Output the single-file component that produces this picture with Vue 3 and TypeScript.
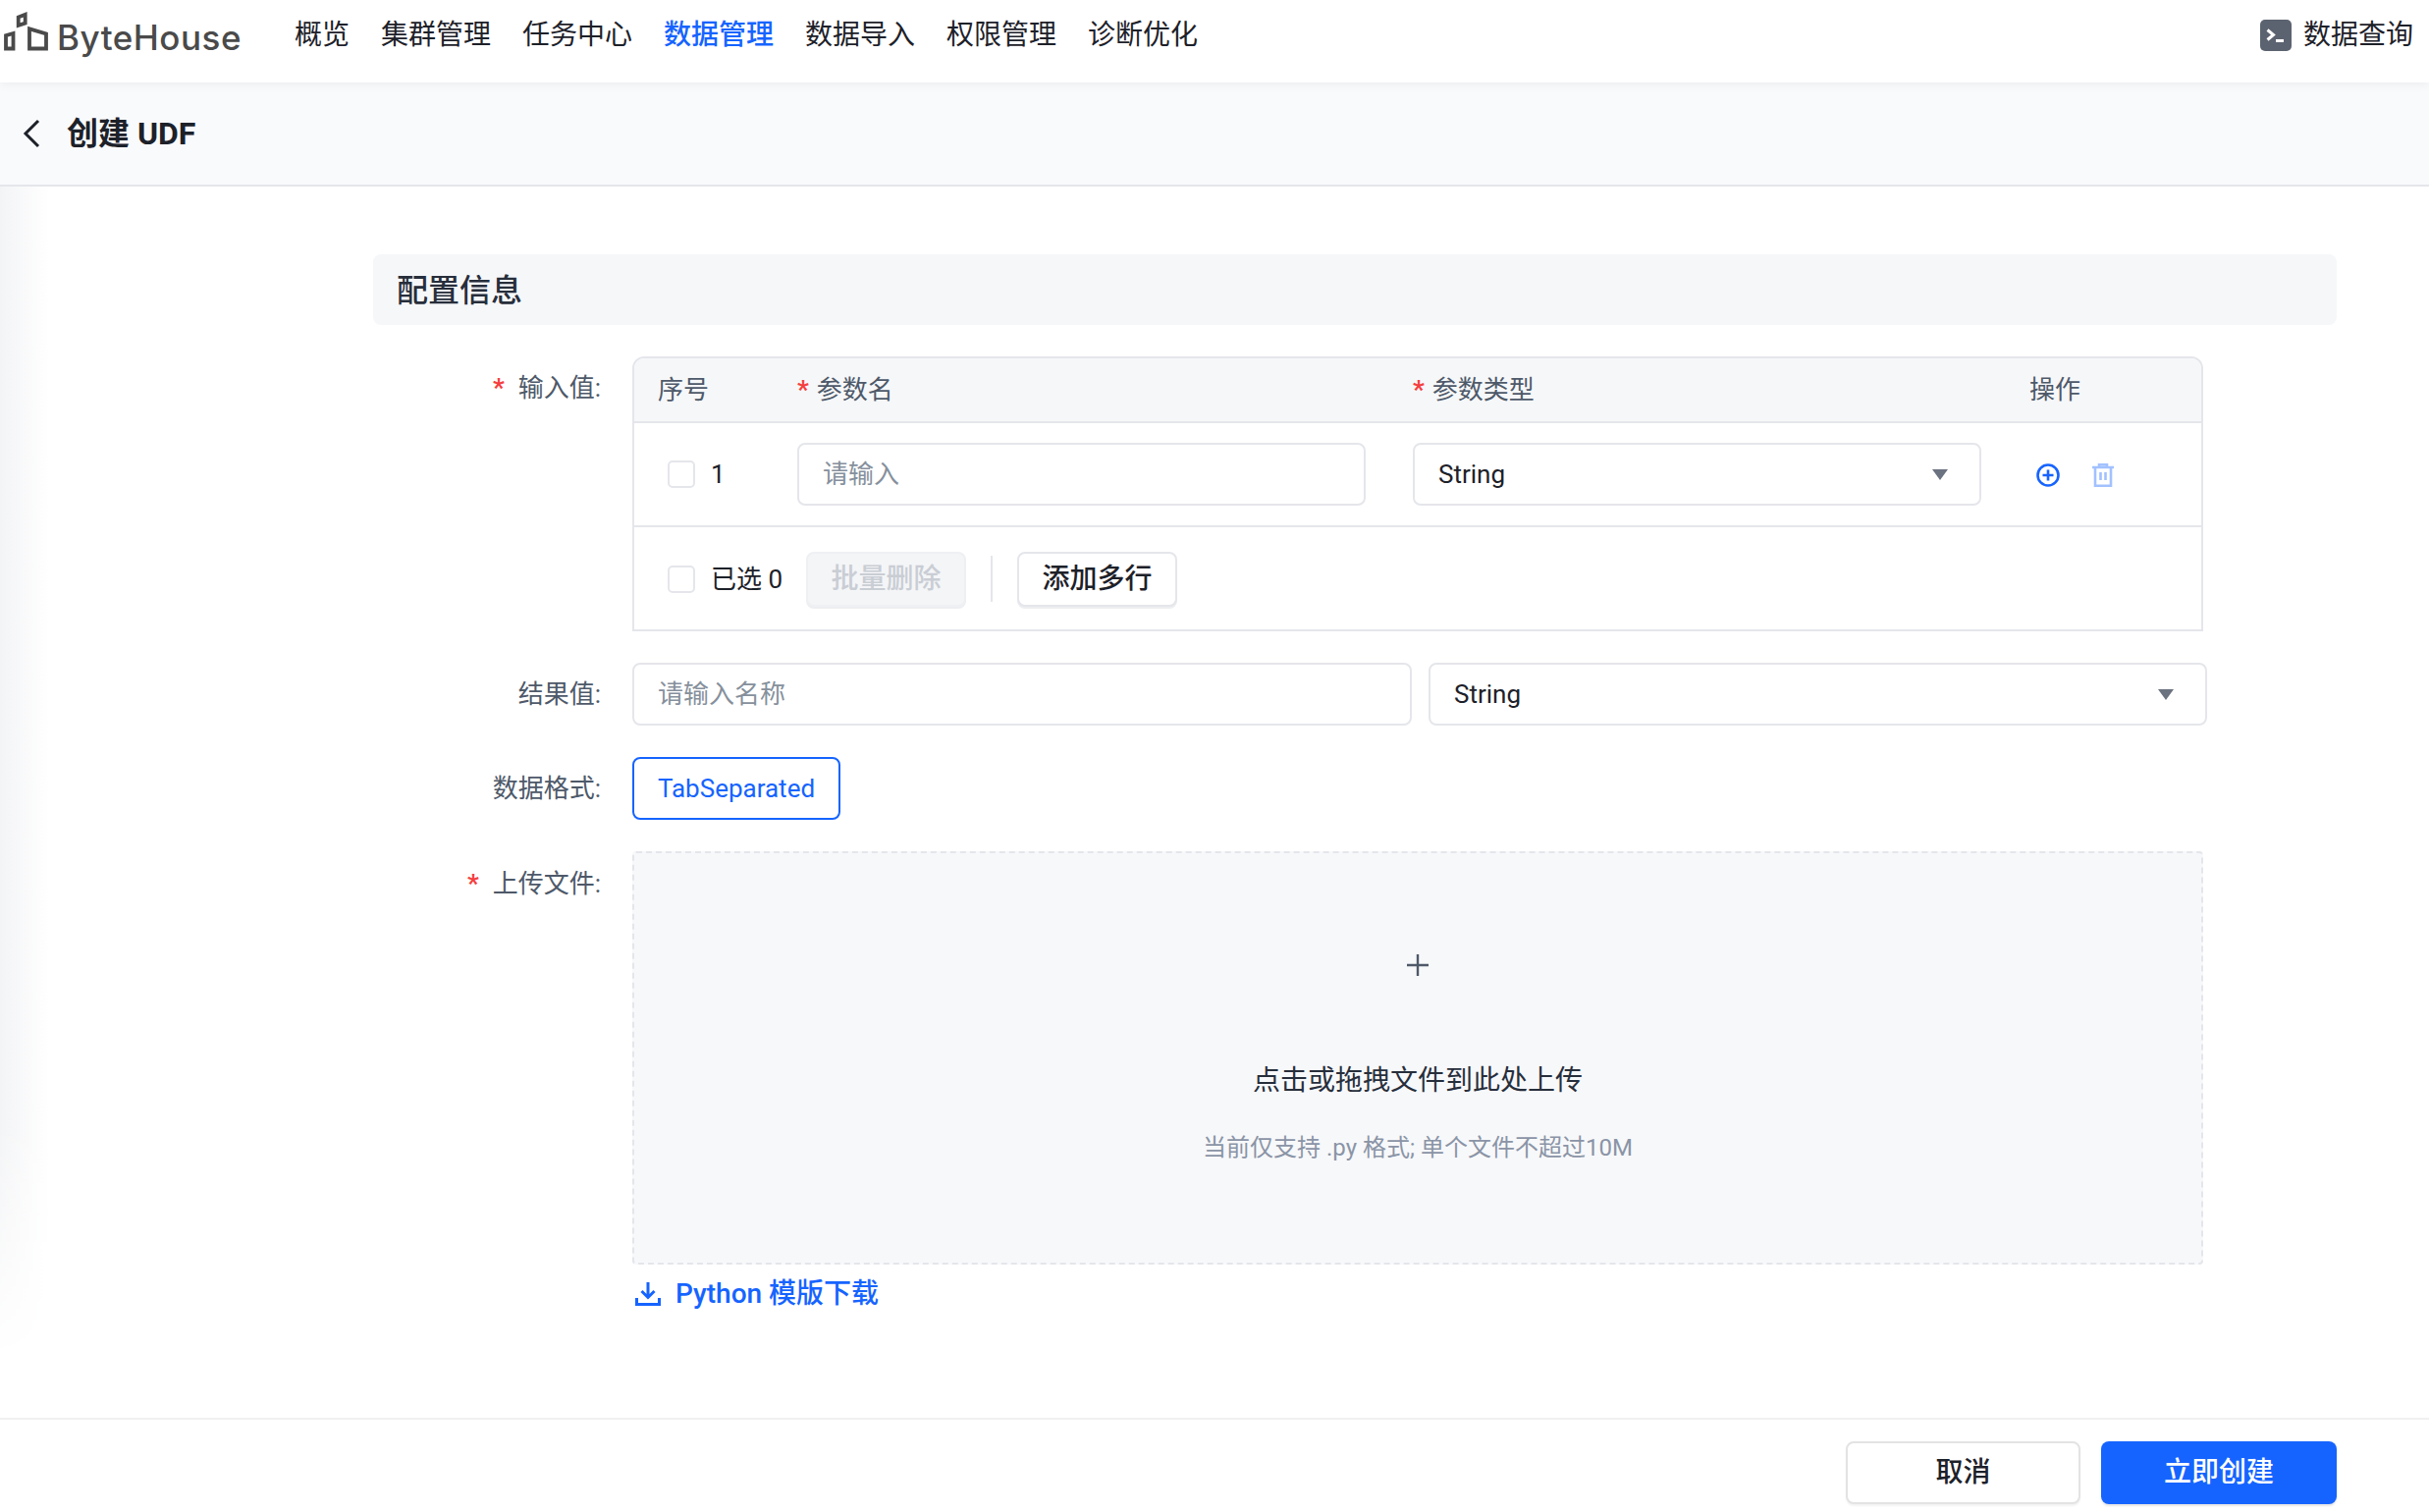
<script setup lang="ts">
/**
 * Create-UDF page: top nav, sub header, config form and footer actions.
 */
interface NavItem {
  label: string
  active?: boolean
}

const navItems: NavItem[] = [
  { label: '概览' },
  { label: '集群管理' },
  { label: '任务中心' },
  { label: '数据管理', active: true },
  { label: '数据导入' },
  { label: '权限管理' },
  { label: '诊断优化' },
]
</script>

<template>
  <div class="page">
    <header class="topbar">
      <div class="logo">
        <svg class="logo-mark" width="50" height="52" viewBox="0 0 50 52" fill="none" stroke="#4a4a4a" stroke-width="3.8">
          <path d="M6 49.5V36.2L13.5 34V49.5Z" />
          <path d="M18.7 25.8V17.6L25.7 14.8V23.6Z" />
          <path d="M30 49.5V29.4L47 34.4V49.5Z" />
        </svg>
        <span class="logo-text">ByteHouse</span>
      </div>
      <nav class="nav">
        <a v-for="item in navItems" :key="item.label" class="nav-item" :class="{ active: item.active }">{{ item.label }}</a>
      </nav>
      <div class="query">
        <span class="query-icon">
          <svg width="32" height="32" viewBox="0 0 32 32" fill="none" stroke="#fff" stroke-width="3">
            <path d="M7.5 10.5L13.5 15.5L7.5 20.5" />
            <path d="M16 21.5H24" />
          </svg>
        </span>
        <span class="query-text">数据查询</span>
      </div>
    </header>

    <div class="subheader">
      <svg width="18" height="30" viewBox="0 0 18 30" fill="none" stroke="#1d2129" stroke-width="3">
        <path d="M16 2L3 15L16 28" />
      </svg>
      <h1 class="title">创建 UDF</h1>
    </div>

    <main class="content">
      <div class="form">
        <h2 class="section">配置信息</h2>

        <div class="row row-table">
          <label class="label"><i class="star">*</i>输入值:</label>
          <div class="table">
            <div class="thead cols">
              <div class="th-first">序号</div>
              <div><i class="star small">*</i>参数名</div>
              <div><i class="star small">*</i>参数类型</div>
              <div>操作</div>
            </div>
            <div class="tbody cols">
              <div class="td-first">
                <span class="checkbox"></span>
                <span>1</span>
              </div>
              <div><div class="input cell-input placeholder">请输入</div></div>
              <div>
                <div class="input cell-select">
                  <span>String</span>
                  <span class="caret"></span>
                </div>
              </div>
              <div class="actions">
                <svg width="24" height="24" viewBox="0 0 24 24" fill="none" stroke="#1664ff" stroke-width="2.6">
                  <circle cx="12" cy="12" r="10.5" />
                  <path d="M12 6.5V17.5M6.5 12H17.5" />
                </svg>
                <svg width="22" height="24" viewBox="0 0 22 24" fill="none" stroke="#a2c1ff" stroke-width="2.6">
                  <path d="M0 4H22M7 4V1.3H15V4" />
                  <path d="M3 4V22.7H19V4" />
                  <path d="M8.5 9V17M13.5 9V17" />
                </svg>
              </div>
            </div>
            <div class="tfoot">
              <span class="checkbox"></span>
              <span class="selected">已选 0</span>
              <button class="btn btn-disabled">批量删除</button>
              <span class="divider"></span>
              <button class="btn btn-outline">添加多行</button>
            </div>
          </div>
        </div>

        <div class="row">
          <label class="label">结果值:</label>
          <div class="result">
            <div class="input placeholder">请输入名称</div>
            <div class="input result-select">
              <span>String</span>
              <span class="caret"></span>
            </div>
          </div>
        </div>

        <div class="row">
          <label class="label">数据格式:</label>
          <div class="format">TabSeparated</div>
        </div>

        <div class="row row-upload">
          <label class="label"><i class="star">*</i>上传文件:</label>
          <div class="upload-col">
            <div class="upload">
              <svg class="upload-plus" width="22" height="22" viewBox="0 0 22 22" fill="none" stroke="#4e5969" stroke-width="2.4">
                <path d="M11 0V22M0 11H22" />
              </svg>
              <p class="upload-title">点击或拖拽文件到此处上传</p>
              <p class="upload-hint">当前仅支持 .py 格式; 单个文件不超过10M</p>
            </div>
            <a class="download">
              <svg width="26" height="24" viewBox="0 0 26 24" fill="none" stroke="#1664ff" stroke-width="3">
                <path d="M13 0V15M6.5 9L13 15.5L19.5 9" />
                <path d="M1.5 16V22.5H24.5V16" />
              </svg>
              <span>Python 模版下载</span>
            </a>
          </div>
        </div>
      </div>
    </main>

    <footer class="footer">
      <button class="btn-footer cancel">取消</button>
      <button class="btn-footer primary">立即创建</button>
    </footer>
  </div>
</template>

<style>
html,
body {
  margin: 0;
  background: #fff;
}
</style>

<style scoped>
.page {
  display: flex;
  flex-direction: column;
  height: 1540px;
  overflow: hidden;
  font-family: Roboto, "Noto Sans CJK SC", sans-serif;
  font-size: 26px;
  line-height: 36px;
  color: #1d2129;
  background: #fff;
}

/* ── Top bar ─────────────────────────────── */
.topbar {
  position: relative;
  z-index: 2;
  display: flex;
  align-items: flex-start;
  flex: none;
  height: 84px;
  background: #fff;
  box-shadow: 0 2px 10px rgba(0, 0, 0, 0.06);
}
.logo {
  display: flex;
  align-items: flex-start;
  width: 300px;
  flex: none;
}
.logo-mark {
  flex: none;
}
.logo-text {
  margin: 18px 0 0 8px;
  font-family: Inter, sans-serif;
  font-size: 35px;
  font-weight: 500;
  line-height: 40px;
  letter-spacing: 0.5px;
  color: #4a4a4a;
}
.nav {
  display: flex;
  gap: 32px;
}
.nav-item {
  font-size: 28px;
  line-height: 72px;
  color: #1d2129;
}
.nav-item.active {
  color: #1664ff;
  font-weight: 500;
}
.query {
  display: flex;
  align-items: flex-start;
  gap: 12px;
  margin-left: auto;
  margin-right: 16px;
  padding-top: 20px;
}
.query-text {
  font-size: 28px;
  line-height: 32px;
}
.query-icon {
  display: flex;
  width: 32px;
  height: 32px;
  border-radius: 5px;
  background: #5c6370;
}

/* ── Sub header ──────────────────────────── */
.subheader {
  display: flex;
  align-items: center;
  flex: none;
  box-sizing: border-box;
  height: 106px;
  padding-left: 23px;
  background: #f9fafc;
  border-bottom: 2px solid #e5e6eb;
}
.title {
  margin: 0 0 0 27px;
  font-size: 32px;
  font-weight: 700;
  line-height: 44px;
  color: #1d2129;
}

/* ── Form ────────────────────────────────── */
.content {
  position: relative;
  flex: 1;
  min-height: 0;
}
.content::before {
  content: "";
  position: absolute;
  left: 0;
  top: 0;
  bottom: 60px;
  width: 50px;
  background: linear-gradient(90deg, #f3f4f6, #fff);
  -webkit-mask-image: linear-gradient(#000 80%, transparent);
  mask-image: linear-gradient(#000 80%, transparent);
}
.form {
  position: relative;
  box-sizing: border-box;
  width: 2000px;
  margin-left: 380px;
  padding-top: 69px;
}
.section {
  box-sizing: border-box;
  height: 72px;
  margin: 0 0 32px;
  padding-left: 24px;
  border-radius: 8px;
  background: #f6f7f9;
  font-size: 32px;
  font-weight: 500;
  line-height: 74px;
  color: #272e3b;
}
.row {
  display: flex;
  margin-bottom: 32px;
}
.label {
  flex: none;
  width: 232px;
  margin-right: 32px;
  text-align: right;
  line-height: 64px;
  color: #4e5969;
}
.row-upload .label {
  padding-top: 1px;
}
.star {
  margin-right: 14px;
  font-style: normal;
  font-weight: 700;
  color: #f53f3f;
}
.star.small {
  margin-right: 8px;
}

/* ── Table ───────────────────────────────── */
.table {
  box-sizing: border-box;
  width: 1600px;
  height: 280px;
  border: 2px solid #e5e6eb;
  border-radius: 12px 12px 0 0;
}
.cols {
  display: grid;
  grid-template-columns: 166px 627px 628px 1fr;
  align-items: center;
}
.thead {
  box-sizing: border-box;
  height: 66px;
  background: #f6f7f9;
  border-radius: 10px 10px 0 0;
  border-bottom: 2px solid #e5e6eb;
  color: #4e5969;
}
.th-first {
  padding-left: 24px;
}
.tbody {
  box-sizing: border-box;
  height: 106px;
  border-bottom: 2px solid #e5e6eb;
}
.td-first {
  display: flex;
  align-items: center;
  gap: 16px;
  padding-left: 34px;
}
.checkbox {
  flex: none;
  box-sizing: border-box;
  width: 28px;
  height: 28px;
  border: 2px solid #e5e6eb;
  border-radius: 5px;
  background: #fff;
}
.input {
  display: flex;
  align-items: center;
  box-sizing: border-box;
  height: 64px;
  padding: 0 24px;
  border: 2px solid #e5e6eb;
  border-radius: 8px;
  background: #fff;
}
.placeholder {
  color: #86909c;
}
.cell-input {
  width: 579px;
}
.cell-select {
  justify-content: space-between;
  width: 579px;
  padding-right: 32px;
}
.caret {
  width: 0;
  height: 0;
  border-left: 8px solid transparent;
  border-right: 8px solid transparent;
  border-top: 11px solid #6b7280;
}
.actions {
  display: flex;
  align-items: center;
  gap: 33px;
  padding: 2px 0 0 7px;
}
.tfoot {
  display: flex;
  align-items: center;
  height: 105px;
  padding-left: 34px;
}
.selected {
  margin-left: 16px;
  margin-right: 24px;
}
.btn {
  box-sizing: border-box;
  height: 56px;
  width: 163px;
  padding: 0;
  border-radius: 8px;
  font: 500 28px/36px Roboto, "Noto Sans CJK SC", sans-serif;
}
.btn-disabled {
  border: 2px solid #eff0f3;
  background: #f4f5f7;
  color: #c9cdd4;
  box-shadow: 0 2px 0 #eceef1;
}
.btn-outline {
  border: 2px solid #e5e6eb;
  background: #fff;
  color: #1d2129;
  box-shadow: 0 2px 0 #eceef1;
}
.divider {
  width: 2px;
  height: 47px;
  margin: 0 25px;
  background: #e5e6eb;
}

/* ── Result / format ─────────────────────── */
.result {
  display: grid;
  grid-template-columns: 794px 793px;
  column-gap: 17px;
}
.result-select {
  justify-content: space-between;
  padding-right: 32px;
}
.format {
  box-sizing: border-box;
  width: 212px;
  height: 64px;
  border: 2px solid #1664ff;
  border-radius: 8px;
  text-align: center;
  line-height: 60px;
  color: #1664ff;
}

/* ── Upload ──────────────────────────────── */
.upload-col {
  width: 1600px;
}
.upload {
  display: flex;
  flex-direction: column;
  align-items: center;
  box-sizing: border-box;
  height: 421px;
  padding-top: 103px;
  border: 2px dashed #e5e6eb;
  border-radius: 4px;
  background: #f7f8fa;
}
.upload-plus {
  flex: none;
}
.upload-title {
  margin: 87px 0 0;
  font-size: 28px;
  line-height: 40px;
  color: #272e3b;
}
.upload-hint {
  margin: 30px 0 0;
  font-size: 24px;
  line-height: 36px;
  color: #8a94a6;
}
.download {
  display: flex;
  align-items: center;
  gap: 15px;
  margin: 14px 0 0 3px;
  font-size: 28px;
  font-weight: 500;
  line-height: 32px;
  color: #1664ff;
}

/* ── Footer ──────────────────────────────── */
.footer {
  display: flex;
  justify-content: flex-end;
  gap: 21px;
  flex: none;
  box-sizing: border-box;
  height: 96px;
  padding: 22px 94px 0 0;
  border-top: 2px solid #f0f0f0;
  background: #fff;
}
.btn-footer {
  box-sizing: border-box;
  height: 64px;
  padding: 0;
  border-radius: 8px;
  font: 500 28px/36px Roboto, "Noto Sans CJK SC", sans-serif;
}
.cancel {
  width: 239px;
  border: 2px solid #e3e3e3;
  background: #fff;
  color: #1d2129;
  box-shadow: 0 2px 2px rgba(0, 0, 0, 0.05);
}
.primary {
  width: 240px;
  border: none;
  background: #1664ff;
  color: #fff;
  box-shadow: 0 2px 2px rgba(0, 0, 0, 0.1);
}
</style>
